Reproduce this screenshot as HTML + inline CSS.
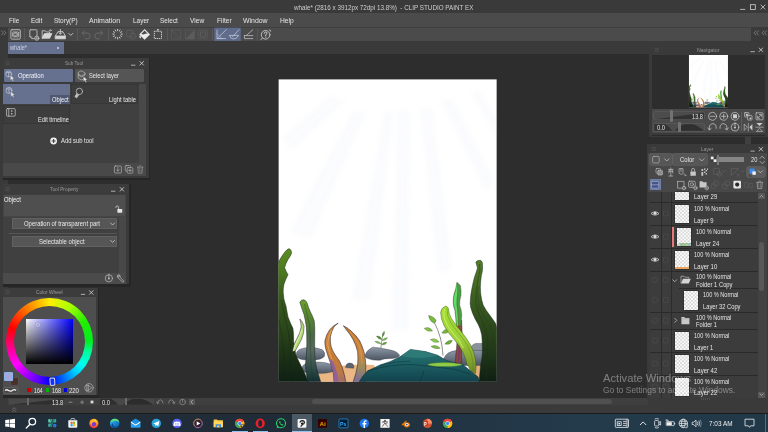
<!DOCTYPE html>
<html><head><meta charset="utf-8"><title>CLIP STUDIO PAINT EX</title>
<style>
html,body{margin:0;padding:0;background:#3a3a3a}
#root{position:relative;width:768px;height:432px;overflow:hidden;background:#3a3a3a;font-family:"Liberation Sans",sans-serif}
#root div,#root span,#root svg{position:absolute}
#root span{white-space:nowrap;line-height:1;display:block}
</style></head><body><div id="root">
<div style="left:8px;top:53.5px;width:640.5px;height:344.8px;background:#2d2d2d;"></div>
<div style="left:0px;top:0px;width:768px;height:13px;background:#3a3a3a;"></div>
<div style="left:0px;top:13px;width:768px;height:14px;background:#4b4b4b;"></div>
<div style="left:0px;top:27px;width:768px;height:14.5px;background:#3a3a3a;"></div>
<div style="left:8px;top:27.5px;width:743.7px;height:13.5px;background:#4b4b4b;"></div>
<div style="left:8px;top:27px;width:743px;height:0.6px;background:#3f3f3f;"></div>
<div style="left:0px;top:41.5px;width:768px;height:12px;background:#3a3a3a;"></div>
<div style="left:8px;top:42.3px;width:56px;height:11.7px;background:#65718f;"></div>
<div style="left:57px;top:46.9px;width:2.2px;height:2.2px;background:#cdd3e4;border-radius:50%"></div>
<div style="left:3px;top:58px;width:147px;height:121.5px;background:#262626;"></div>
<div style="left:3px;top:58px;width:145.5px;height:120px;background:#3a3a3a;"></div>
<div style="left:3px;top:58px;width:145.5px;height:10.5px;background:#3c3c3c;"></div>
<div style="left:3px;top:83.5px;width:143px;height:92px;background:#494949;"></div>
<div style="left:4px;top:69px;width:69px;height:13px;background:#65718f;border-radius:1px"></div>
<div style="left:75px;top:69px;width:69px;height:13px;background:#555555;border-radius:1px"></div>
<div style="left:3px;top:83.5px;width:135.5px;height:79.5px;background:#404040;"></div>
<div style="left:3px;top:83.5px;width:135.5px;height:0.7px;background:#353535;"></div>
<div style="left:3px;top:84px;width:67px;height:20px;background:#65718f;"></div>
<div style="left:50px;top:95px;width:19.5px;height:8.5px;background:#4f5870;"></div>
<div style="left:70.5px;top:84px;width:67.5px;height:20px;background:#3d3d3d;box-shadow:inset 0 0 0 0.5px #333"></div>
<div style="left:3px;top:104.5px;width:67px;height:19.5px;background:#3d3d3d;box-shadow:inset 0 0 0 0.5px #333"></div>
<div style="left:3px;top:184px;width:128px;height:103px;background:#262626;"></div>
<div style="left:3px;top:184px;width:126.2px;height:100px;background:#3a3a3a;"></div>
<div style="left:3px;top:184px;width:126.2px;height:10.5px;background:#3c3c3c;"></div>
<div style="left:3px;top:194.5px;width:123px;height:89px;background:#4b4b4b;"></div>
<div style="left:3.5px;top:195px;width:121.8px;height:21px;background:#4f4f4f;box-shadow:0 0 0 0.5px #404040"></div>
<div style="left:3px;top:217px;width:115.5px;height:55.8px;background:#404040;"></div>
<div style="left:12.3px;top:218.4px;width:104.7px;height:10.9px;background:#565656;border-radius:1.2px;box-shadow:inset 0 0 0 0.5px #6c6c6c"></div>
<div style="left:9px;top:232.5px;width:108px;height:0.7px;background:#565656;"></div>
<div style="left:12.3px;top:235.7px;width:104.7px;height:10.9px;background:#565656;border-radius:1.2px;box-shadow:inset 0 0 0 0.5px #6c6c6c"></div>
<div style="left:3px;top:288px;width:96px;height:109.5px;background:#262626;"></div>
<div style="left:3px;top:288px;width:94.7px;height:107px;background:#3a3a3a;"></div>
<div style="left:3px;top:288px;width:94.7px;height:9.5px;background:#3c3c3c;"></div>
<div style="left:3px;top:297.3px;width:93px;height:97.7px;background:#4e4e4e;"></div>
<div style="left:5.5px;top:297.9px;width:87.4px;height:87.4px;background:conic-gradient(from 0deg,#ffee00 0deg,#aaff00 30deg,#22ee00 60deg,#00ee22 90deg,#00ff99 105deg,#00ffee 125deg,#00ccff 140deg,#0066ff 160deg,#0000ff 180deg,#5500ff 195deg,#aa00ff 215deg,#ff00ff 235deg,#ff00aa 255deg,#ff0044 275deg,#ff0000 290deg,#ff6600 320deg,#ffaa00 340deg,#ffee00 360deg);border-radius:50%"></div>
<div style="left:13.8px;top:306.2px;width:70.8px;height:70.8px;background:#4e4e4e;border-radius:50%"></div>
<div style="left:26.2px;top:318.7px;width:46.7px;height:45.8px;background:linear-gradient(to bottom,rgba(0,0,0,0),#000),linear-gradient(to right,#fff,#0000ff);"></div>
<div style="left:27.4px;top:387.8px;width:3.8px;height:3.8px;background:#c80000;"></div>
<div style="left:45.6px;top:387.8px;width:3.8px;height:3.8px;background:#00b400;"></div>
<div style="left:63.6px;top:387.8px;width:3.8px;height:3.8px;background:#0000e0;"></div>
<div style="left:10.6px;top:377.7px;width:7.2px;height:7.6px;background:#4a3029;box-shadow:0 0 0 0.5px #5a5a5a;border-radius:1px"></div>
<div style="left:3.6px;top:372.2px;width:9.4px;height:9.2px;background:#a4a8dc;box-shadow:inset 0 0 0 1px #8fb2ea, 0 0 0 0.5px #3a4a66;border-radius:1.5px"></div>
<div style="left:8px;top:398.3px;width:187px;height:6.7px;background:#404040;"></div>
<div style="left:9px;top:398.8px;width:54.5px;height:6px;background:#484848;"></div>
<div style="left:100px;top:398.8px;width:53.5px;height:6px;background:#484848;"></div>
<div style="left:188.5px;top:398.6px;width:6.5px;height:6.4px;background:#565656;"></div>
<div style="left:195px;top:398.3px;width:453px;height:6.7px;background:#3f3f3f;"></div>
<div style="left:312px;top:399px;width:300px;height:5.4px;background:#505050;border-radius:2.7px"></div>
<div style="left:0px;top:405px;width:768px;height:9px;background:#3a3a3a;"></div>
<div style="left:648.5px;top:41.5px;width:119.5px;height:372px;background:#3a3a3a;"></div>
<div style="left:751px;top:27px;width:17px;height:14.5px;background:#3a3a3a;"></div>
<div style="left:651.7px;top:45px;width:113px;height:91.3px;background:#2a2a2a;"></div>
<div style="left:651.7px;top:45px;width:113px;height:90px;background:#3a3a3a;"></div>
<div style="left:652.3px;top:54.7px;width:112.4px;height:54px;background:#2d2d2d;"></div>
<div style="left:652.3px;top:108.7px;width:112.4px;height:24px;background:#4a4a4a;"></div>
<div style="left:654.3px;top:112.3px;width:49.6px;height:7px;background:#4c4c4c;border-radius:1px;box-shadow:0 0 0 0.5px #626262"></div>
<div style="left:654.3px;top:124px;width:49.6px;height:6.7px;background:#4c4c4c;border-radius:1px;box-shadow:0 0 0 0.5px #626262"></div>
<div style="left:741px;top:111.5px;width:0.7px;height:19.5px;background:#5e5e5e;"></div>
<div style="left:648.5px;top:136.5px;width:119.5px;height:7.2px;background:#2d2d2d;"></div>
<div style="left:745px;top:137px;width:6.3px;height:6.7px;background:#404040;"></div>
<div style="left:646.7px;top:143.7px;width:121.3px;height:256px;background:#3a3a3a;"></div>
<div style="left:648px;top:153.3px;width:118.5px;height:38.5px;background:#484848;"></div>
<div style="left:650px;top:154.2px;width:21.7px;height:11px;background:#565656;border-radius:1.2px;box-shadow:0 0 0 0.5px #6a6a6a"></div>
<div style="left:673.3px;top:154.2px;width:34px;height:11px;background:#565656;border-radius:1.2px;box-shadow:0 0 0 0.5px #6a6a6a"></div>
<div style="left:710.8px;top:157.2px;width:33.4px;height:4.8px;background:#858585;"></div>
<div style="left:716.5px;top:154.6px;width:2px;height:10px;background:#7a7a7a;"></div>
<div style="left:747px;top:167px;width:17.7px;height:10px;background:#5c5c5c;border-radius:1.2px;box-shadow:0 0 0 0.5px #6e6e6e"></div>
<div style="left:649.5px;top:179.2px;width:11.3px;height:11px;background:#62719a;border-radius:1px;box-shadow:inset 0 0 0 0.5px #7e8db4"></div>
<div style="left:649.5px;top:191.7px;width:108.5px;height:206.5px;background:#3c3c3c;"></div>
<div style="left:758px;top:191.7px;width:8.5px;height:206.5px;background:#424242;"></div>
<div style="left:758.6px;top:242.3px;width:5.6px;height:49px;background:#585858;border-radius:2.8px"></div>
<div style="left:758.3px;top:193px;width:6.4px;height:6px;background:#585858;border-radius:0.8px"></div>
<div style="left:758.3px;top:391.7px;width:6.4px;height:6px;background:#585858;border-radius:0.8px"></div>
<div style="left:660.6px;top:191.7px;width:0.7px;height:206.5px;background:#2c2c2c;"></div>
<div style="left:671.2px;top:191.7px;width:0.7px;height:206.5px;background:#2c2c2c;"></div>
<div style="left:649.5px;top:201.6px;width:108.5px;height:0.8px;background:#2a2a2a;"></div>
<div style="left:675px;top:191.7px;width:14.3px;height:8.5px;background:repeating-conic-gradient(#d4d4d4 0% 25%,#ffffff 0% 50%) 0 0/3.55px 3.55px;box-shadow:0 0 0 0.4px #222"></div>
<div style="left:649.5px;top:224.9px;width:108.5px;height:0.8px;background:#2a2a2a;"></div>
<div style="left:675px;top:204.6px;width:14.3px;height:18.3px;background:repeating-conic-gradient(#d4d4d4 0% 25%,#ffffff 0% 50%) 0 0/3.55px 3.55px;box-shadow:0 0 0 0.4px #222"></div>
<div style="left:649.5px;top:247.9px;width:108.5px;height:0.8px;background:#2a2a2a;"></div>
<div style="left:677px;top:227.9px;width:14.3px;height:18px;background:repeating-conic-gradient(#d4d4d4 0% 25%,#ffffff 0% 50%) 0 0/3.55px 3.55px;box-shadow:0 0 0 0.4px #222"></div>
<div style="left:672.2px;top:226.7px;width:2.3px;height:20px;background:#e87878;"></div>
<div style="left:649.5px;top:270.9px;width:108.5px;height:0.8px;background:#2a2a2a;"></div>
<div style="left:675px;top:250.9px;width:14.3px;height:18px;background:repeating-conic-gradient(#d4d4d4 0% 25%,#ffffff 0% 50%) 0 0/3.55px 3.55px;box-shadow:0 0 0 0.4px #222"></div>
<div style="left:679px;top:287.9px;width:79px;height:0.8px;background:#2a2a2a;"></div>
<div style="left:649.5px;top:311.6px;width:108.5px;height:0.8px;background:#2a2a2a;"></div>
<div style="left:683.8px;top:290.9px;width:14.3px;height:18.7px;background:repeating-conic-gradient(#d4d4d4 0% 25%,#ffffff 0% 50%) 0 0/3.55px 3.55px;box-shadow:0 0 0 0.4px #222"></div>
<div style="left:649.5px;top:328.8px;width:108.5px;height:0.8px;background:#2a2a2a;"></div>
<div style="left:649.5px;top:351.6px;width:108.5px;height:0.8px;background:#2a2a2a;"></div>
<div style="left:675px;top:331.8px;width:14.3px;height:17.8px;background:repeating-conic-gradient(#d4d4d4 0% 25%,#ffffff 0% 50%) 0 0/3.55px 3.55px;box-shadow:0 0 0 0.4px #222"></div>
<div style="left:649.5px;top:374.6px;width:108.5px;height:0.8px;background:#2a2a2a;"></div>
<div style="left:675px;top:354.6px;width:14.3px;height:18px;background:repeating-conic-gradient(#d4d4d4 0% 25%,#ffffff 0% 50%) 0 0/3.55px 3.55px;box-shadow:0 0 0 0.4px #222"></div>
<div style="left:649.5px;top:397.8px;width:108.5px;height:0.8px;background:#2a2a2a;"></div>
<div style="left:675px;top:377.6px;width:14.3px;height:18.2px;background:repeating-conic-gradient(#d4d4d4 0% 25%,#ffffff 0% 50%) 0 0/3.55px 3.55px;box-shadow:0 0 0 0.4px #222"></div>
<div style="left:646.7px;top:398.2px;width:121.3px;height:1.8px;background:#3a3a3a;"></div>
<div style="left:677.4px;top:243.2px;width:13.6px;height:2.4px;background:linear-gradient(to right,rgba(90,140,70,0.0),rgba(90,150,80,0.55) 30%,rgba(120,180,90,0.6) 70%,rgba(70,130,150,0.5));"></div>
<div style="left:675px;top:267px;width:14.3px;height:2.2px;background:#eaa45c;"></div>
<div style="left:118.5px;top:217px;width:7.5px;height:55.8px;background:#484848;"></div>
<div style="left:3px;top:272.8px;width:123px;height:11.2px;background:#4b4b4b;"></div>
<div style="left:0px;top:413.6px;width:768px;height:18.4px;background:linear-gradient(to right,#222f3b 0%,#1f2c38 40%,#243b4c 75%,#213848 100%);"></div>
<div style="left:0px;top:413.3px;width:768px;height:0.9px;background:#1a1a1a;"></div>
<div style="left:292.2px;top:414.2px;width:19.6px;height:17.8px;background:#4b5964;"></div>
<div style="left:292.2px;top:431px;width:19.6px;height:1px;background:#8fc3ee;"></div>
<div style="left:231.7px;top:431px;width:16px;height:1px;background:#8fc3ee;"></div>
<div style="left:252.7px;top:431px;width:15.5px;height:1px;background:#8fc3ee;"></div>
<div style="left:765.2px;top:414.2px;width:0.6px;height:17.8px;background:#5a6b78;"></div>
<svg width="768" height="432" viewBox="0 0 768 432" style="left:0;top:0">
<g fill="none" stroke="#8c8c8c" stroke-width="0.7" stroke-linecap="round" stroke-linejoin="round" ><path d="M1.4 30.8 L3.4 32.9 L1.4 35 M4 30.8 L6 32.9 L4 35"/></g>
<g fill="none" stroke="#c4c4c4" stroke-width="0.8" stroke-linecap="round" stroke-linejoin="round" ><rect x="10.8" y="29.6" width="9.6" height="9.6" rx="1.4" fill="#565656"/><ellipse cx="15.6" cy="34.4" rx="3.7" ry="2.1" transform="rotate(28 15.6 34.4)" stroke-width="0.6"/><ellipse cx="15.6" cy="34.4" rx="3.7" ry="2.1" transform="rotate(-28 15.6 34.4)" stroke-width="0.6"/><ellipse cx="15.6" cy="34.4" rx="1.7" ry="1.1" stroke-width="0.5"/></g>
<rect x="24.049999999999997" y="28.3" width="0.7" height="12" fill="#606060"/>
<rect x="77.15" y="28.3" width="0.7" height="12" fill="#606060"/>
<rect x="108.15" y="28.3" width="0.7" height="12" fill="#606060"/>
<rect x="167.15" y="28.3" width="0.7" height="12" fill="#606060"/>
<rect x="212.05" y="28.3" width="0.7" height="12" fill="#606060"/>
<rect x="256.95" y="28.3" width="0.7" height="12" fill="#606060"/>
<g fill="none" stroke="#cccccc" stroke-width="0.8" stroke-linecap="round" stroke-linejoin="round" ><path d="M30.6 29.8 H36.2 Q37 29.8 37 30.6 V35.8 M30.6 29.8 Q29.8 29.8 29.8 30.6 V36.6 L31.8 38.6 H34.2"/><circle cx="36.8" cy="38.2" r="2.1"/><path d="M35.6 38.2 H38 M36.8 37 V39.4" stroke-width="0.6"/><path d="M29.8 36.6 H31.8 V38.6" stroke-width="0.5"/></g>
<g fill="none" stroke="#d6d6d6" stroke-width="0.8" stroke-linecap="round" stroke-linejoin="round" ><path d="M42.2 38 V30.8 H45.4 L46.4 32 H49.6 V33.6 M42.2 38 L44.4 33.6 H52 L49.8 38Z"/><path d="M49.2 30.4 H51.4 M50.6 29.6 L51.4 30.4 L50.6 31.2" stroke-width="0.6"/></g>
<g fill="#d6d6d6" stroke="none" stroke-width="0.8" stroke-linecap="round" stroke-linejoin="round" ><path d="M44.4 33.6 H52 L49.8 38 H42.2Z" fill="#d6d6d6" stroke="none"/></g>
<g fill="none" stroke="#d6d6d6" stroke-width="0.8" stroke-linecap="round" stroke-linejoin="round" ><path d="M55.4 36 L58 31.6 H62.8 L65.4 36 V38.8 H55.4Z M55.4 36 H65.4"/><path d="M60.4 29.4 V34 M58.8 32.6 L60.4 34.2 L62 32.6"/></g>
<rect x="55.4" y="36" width="10" height="2.8" fill="#d6d6d6"/>
<g fill="none" stroke="#d6d6d6" stroke-width="0.8" stroke-linecap="round" stroke-linejoin="round" ><path d="M68.8 33.4 L70.8 35.4 L72.8 33.4"/></g>
<g fill="none" stroke="#6c6c6c" stroke-width="0.9" stroke-linecap="round" stroke-linejoin="round" ><path d="M84.2 31 L82.2 33 L84.2 35 M82.4 33 H87.4 Q90.2 33.2 90.2 36 Q90.2 38.8 87.2 38.8 H85.6"/></g>
<g fill="none" stroke="#6c6c6c" stroke-width="0.9" stroke-linecap="round" stroke-linejoin="round" ><path d="M100.8 31 L102.8 33 L100.8 35 M102.6 33 H97.6 Q94.8 33.2 94.8 36 Q94.8 38.8 97.8 38.8 H99.4"/></g>
<path d="M120.70 34.10 L122.80 34.10 M120.28 35.65 L122.10 36.70 M119.15 36.78 L120.20 38.60 M117.60 37.20 L117.60 39.30 M116.05 36.78 L115.00 38.60 M114.92 35.65 L113.10 36.70 M114.50 34.10 L112.40 34.10 M114.92 32.55 L113.10 31.50 M116.05 31.42 L115.00 29.60 M117.60 31.00 L117.60 28.90 M119.15 31.42 L120.20 29.60 M120.28 32.55 L122.10 31.50 " fill="none" stroke="#d6d6d6" stroke-width="0.9"/>
<g fill="none" stroke="#5e5e5e" stroke-width="0.8" stroke-linecap="round" stroke-linejoin="round" ><rect x="126.6" y="30.4" width="6.4" height="6.4" rx="0.6"/><circle cx="133" cy="36" r="3"/></g>
<path d="M144.6 29 L150 34.5 L144.6 39.8 L139.2 34.5Z" fill="#ececec"/><path d="M144.6 30.6 L147.9 33.9 Q146.4 33.2 144.8 34 Q143 34.8 141.3 33.9Z" fill="#4b4b4b"/><path d="M139.6 35.6 Q138.8 37.8 140.2 38.4 Q141.4 37.8 140.8 36.2Z" fill="#ececec"/>
<rect x="154.3" y="31.3" width="7.2" height="7.2" fill="none" stroke="#d6d6d6" stroke-width="1" stroke-dasharray="1.2 0.8"/><path d="M157.9 29.2 V31.3" stroke="#d6d6d6" stroke-width="0.8"/><rect x="157.2" y="29" width="1.4" height="1.2" fill="#d6d6d6"/>
<g fill="none" stroke="#5c5c5c" stroke-width="0.7" stroke-linecap="round" stroke-linejoin="round" ><rect x="171.4" y="30" width="9" height="9" stroke-dasharray="0.8 0.8"/><path d="M171.4 30 L180.4 39"/></g>
<g fill="none" stroke="#5c5c5c" stroke-width="0.7" stroke-linecap="round" stroke-linejoin="round" ><rect x="185.4" y="30" width="9" height="9" stroke-dasharray="0.8 0.8"/></g>
<path d="M185.4 39 L194.4 30 V39Z" fill="#5c5c5c"/>
<g fill="none" stroke="#5a5a5a" stroke-width="0.7" stroke-linecap="round" stroke-linejoin="round" ><rect x="198.6" y="30" width="8.8" height="8.8" rx="1.4"/><rect x="200.6" y="32" width="4.8" height="4.8" stroke-width="1.2"/></g>
<rect x="214.3" y="27.7" width="26.5" height="13.2" fill="#5f6c8c"/>
<g fill="none" stroke="#c2c8da" stroke-width="0.75" stroke-linecap="round" stroke-linejoin="round" ><path d="M217 30 V38.6 H225.6 M217.4 38.2 L226.4 29.6"/><path d="M217 38.6 L222 38.6 L217 33.6" stroke-width="0.5"/></g>
<g fill="none" stroke="#c2c8da" stroke-width="0.75" stroke-linecap="round" stroke-linejoin="round" ><path d="M229.6 35.4 H238.6 Q236.8 39.2 233 39 Q230.2 38.6 229.6 35.4Z M232.6 36.6 L239 29.8"/></g>
<g fill="none" stroke="#c4c4c4" stroke-width="0.75" stroke-linecap="round" stroke-linejoin="round" ><path d="M244.4 35.6 H252.8 M244.4 35.6 V38.6 H252.8 M246.4 35.4 L252.8 29.8"/></g>
<g fill="none" stroke="#d6d6d6" stroke-width="0.8" stroke-linecap="round" stroke-linejoin="round" ><circle cx="265.6" cy="34.8" r="4.3"/><path d="M262.2 38.2 L261 39.6 M269.4 30 Q270.8 29.6 270.8 31.2"/><path d="M264.2 33.4 Q264.4 32 265.7 32 Q267.1 32.1 267 33.4 Q266.8 34.4 265.7 34.8 V35.8 M265.7 37 V37.2" stroke-width="0.9"/></g>
<g fill="none" stroke="#8c8c8c" stroke-width="0.7" stroke-linecap="round" stroke-linejoin="round" ><path d="M756 30.8 L754 32.9 L756 35 M758.6 30.8 L756.6 32.9 L758.6 35"/></g>
<g fill="none" stroke="#8c8c8c" stroke-width="0.7" stroke-linecap="round" stroke-linejoin="round" ><path d="M764 30.8 L762 32.9 L764 35 M766.6 30.8 L764.6 32.9 L766.6 35"/></g>
<g stroke="#555555" stroke-width="0.6"><path d="M5.3 61.7 h4.4 M5.3 63.2 h4.4 M5.3 64.7 h4.4"/></g>
<path d="M131 65.2 h4.4" stroke="#b8b8b8" stroke-width="0.9"/>
<path d="M139.6 61.199999999999996 l4.2 4.2 M143.79999999999998 61.199999999999996 l-4.2 4.2" stroke="#d8d8d8" stroke-width="0.8"/>
<g stroke="#555555" stroke-width="0.6"><path d="M5.3 187.7 h4.4 M5.3 189.2 h4.4 M5.3 190.7 h4.4"/></g>
<path d="M111 191.20000000000002 h4.4" stroke="#b8b8b8" stroke-width="0.9"/>
<path d="M119.8 187.20000000000002 l4.2 4.2 M124.0 187.20000000000002 l-4.2 4.2" stroke="#d8d8d8" stroke-width="0.8"/>
<g stroke="#555555" stroke-width="0.6"><path d="M5.3 290.7 h4.4 M5.3 292.2 h4.4 M5.3 293.7 h4.4"/></g>
<path d="M80.8 294.4 h4.4" stroke="#b8b8b8" stroke-width="0.9"/>
<path d="M89.2 290.4 l4.2 4.2 M93.4 290.4 l-4.2 4.2" stroke="#d8d8d8" stroke-width="0.8"/>
<g stroke="#555555" stroke-width="0.6"><path d="M654.6 48.3 h4.4 M654.6 49.8 h4.4 M654.6 51.3 h4.4"/></g>
<path d="M750.4 51.699999999999996 h4.4" stroke="#b8b8b8" stroke-width="0.9"/>
<path d="M758.8 47.699999999999996 l4.2 4.2 M763.0 47.699999999999996 l-4.2 4.2" stroke="#d8d8d8" stroke-width="0.8"/>
<g stroke="#555555" stroke-width="0.6"><path d="M651.6 147.6 h4.4 M651.6 149.1 h4.4 M651.6 150.6 h4.4"/></g>
<path d="M750.4 151.1 h4.4" stroke="#b8b8b8" stroke-width="0.9"/>
<path d="M758.8 147.1 l4.2 4.2 M763.0 147.1 l-4.2 4.2" stroke="#d8d8d8" stroke-width="0.8"/>
<path d="M740.2 9.4 H745.2" stroke="#d0d0d0" stroke-width="0.8"/><rect x="750.5" y="4.7" width="4.8" height="4.8" fill="none" stroke="#d0d0d0" stroke-width="0.8"/><path d="M760.7 4.7 L765.3 9.4 M765.3 4.7 L760.7 9.4" stroke="#d0d0d0" stroke-width="0.8"/>
<g fill="none" stroke="#d0d4e0" stroke-width="0.6" stroke-linecap="round" stroke-linejoin="round" ><circle cx="8.600000000000001" cy="74.0" r="3"/><path d="M6.6000000000000005 72.6 h4 M8.600000000000001 72.6 v4"/></g>
<path d="M10.4 75.19999999999999 l0 5.2 l1.3 -1.2 l1 2 l0.9 -0.5 l-1 -1.9 l1.7 -0.2Z" fill="#e8e8e8" stroke="#50586c" stroke-width="0.3"/>
<g fill="none" stroke="#d0d4e0" stroke-width="0.6" stroke-linecap="round" stroke-linejoin="round" ><circle cx="9.0" cy="90.4" r="3"/><path d="M7.0 89 h4 M9.0 89 v4"/></g>
<path d="M10.8 91.6 l0 5.2 l1.3 -1.2 l1 2 l0.9 -0.5 l-1 -1.9 l1.7 -0.2Z" fill="#e8e8e8" stroke="#50586c" stroke-width="0.3"/>
<g fill="none" stroke="#c8c8c8" stroke-width="0.6" stroke-linecap="round" stroke-linejoin="round" ><path d="M81.6 71 L85 72.8 V75.2 L81.6 77 L78.2 75.2 V72.8Z M78.2 75.4 V78.2 L81.6 80 L85 78.2 M78.2 74 L81.6 75.8 L85 74"/></g>
<path d="M83.4 76.4 l0 5.2 l1.3 -1.2 l1 2 l0.9 -0.5 l-1 -1.9 l1.7 -0.2Z" fill="#e8e8e8" stroke="#444" stroke-width="0.3"/>
<g fill="none" stroke="#d0d0d0" stroke-width="0.7" stroke-linecap="round" stroke-linejoin="round" ><circle cx="79.4" cy="91.4" r="3.2"/><path d="M77 93.6 L75 96.6 L76.8 97.8 L78.8 94.6"/></g>
<path d="M76.6 93.4 L74.6 96.6 L76.6 98 L78.8 95Z" fill="#bcbcbc"/>
<g fill="none" stroke="#d0d0d0" stroke-width="0.7" stroke-linecap="round" stroke-linejoin="round" ><rect x="6.6" y="108.6" width="8.6" height="7.6" rx="0.8"/><path d="M8.8 108.6 V116.2"/></g>
<circle cx="11.8" cy="111" r="0.8" fill="#d0d0d0"/><circle cx="11.8" cy="113.8" r="0.8" fill="#d0d0d0"/>
<circle cx="53.6" cy="141" r="3.4" fill="#f0f0f0"/><path d="M51.6 141 H55.6 M53.6 139 V143" stroke="#404040" stroke-width="1.1"/>
<g fill="none" stroke="#b8b8b8" stroke-width="0.65" stroke-linecap="round" stroke-linejoin="round" ><rect x="114.4" y="166" width="7" height="7" rx="1"/><path d="M117.9 167.4 V171 M116.5 169.8 L117.9 171.2 L119.3 169.8"/></g>
<g fill="none" stroke="#b8b8b8" stroke-width="0.65" stroke-linecap="round" stroke-linejoin="round" ><rect x="125.2" y="165.6" width="5.4" height="5.4" rx="1"/><rect x="127.2" y="167.6" width="5.6" height="5.6" rx="1" fill="#484848"/><path d="M128.6 170.4 H131.4 M130 169 V171.8"/></g>
<g fill="none" stroke="#9a9a9a" stroke-width="0.65" stroke-linecap="round" stroke-linejoin="round" ><path d="M137.4 167.2 H143 M138 167.2 L138.4 173.2 H142 L142.4 167.2 M139.2 166 H141.2"/><path d="M139.4 168.4 V172 M141 168.4 V172" stroke-width="0.4"/></g>
<rect x="117.4" y="209" width="4.8" height="3.8" rx="0.5" fill="#e4e4e4"/><path d="M118.6 209 V207.4 Q118.6 206 117.2 206 Q115.9 206 115.9 207.4 V208" fill="none" stroke="#e4e4e4" stroke-width="0.7"/>
<g fill="none" stroke="#d8d8d8" stroke-width="0.7" stroke-linecap="round" stroke-linejoin="round" ><path d="M110.6 223 L112.6 225 L114.6 223"/></g>
<g fill="none" stroke="#d8d8d8" stroke-width="0.7" stroke-linecap="round" stroke-linejoin="round" ><path d="M110.6 240.4 L112.6 242.4 L114.6 240.4"/></g>
<g fill="none" stroke="#c8c8c8" stroke-width="0.65" stroke-linecap="round" stroke-linejoin="round" ><circle cx="108.9" cy="278.3" r="3.6"/><path d="M108.9 274 V277.4"/></g>
<circle cx="108.9" cy="278.5" r="0.9" fill="#c8c8c8"/>
<g fill="none" stroke="#c8c8c8" stroke-width="0.65" stroke-linecap="round" stroke-linejoin="round" ><path d="M117.6 275.6 Q116.6 277.8 118.8 278.6 L122.6 282 Q123.6 282.4 123.8 281.2 L120.4 277.4 Q120.6 275 118.6 274.6 L119.4 276.4 L118.6 277Z"/></g>
<circle cx="37.9" cy="324.7" r="2.1" fill="none" stroke="#e8e8f0" stroke-width="0.6"/><circle cx="37.9" cy="324.7" r="2.6" fill="none" stroke="#6a6a9a" stroke-width="0.35"/>
<rect x="50" y="378" width="4.8" height="7.4" rx="1" fill="#1030ff" stroke="#ffffff" stroke-width="1" transform="rotate(-4 52.4 381.7)"/><rect x="49.4" y="377.4" width="6" height="8.6" rx="1.4" fill="none" stroke="#222" stroke-width="0.35" transform="rotate(-4 52.4 381.7)"/>
<rect x="3.5" y="387.6" width="14.4" height="5.6" rx="1.2" fill="#454545" stroke="#8a8a8a" stroke-width="0.4"/><path d="M5 390.6 Q6.6 389 8.4 390.4 Q10.4 391.8 12.2 390.4 Q14 389 16.2 390.4" fill="none" stroke="#f0f0f0" stroke-width="1.3"/>
<g fill="none" stroke="#c4c4c4" stroke-width="0.6" stroke-linecap="round" stroke-linejoin="round" ><circle cx="89" cy="387.8" r="4.2"/><path d="M86.8 385.2 V390.4 M86.8 385.2 H88.6 M86.8 390.4 H88.6 M88.6 385.6 L91.6 387.8 L88.6 390Z"/></g>
<path d="M9 404.8 L63.5 398.8 V404.8Z" fill="#2f2f2f"/>
<path d="M123 404.8 Q128 400 133 399 H142 Q148 400.4 153.5 404.8Z" fill="#2c2c2c"/><path d="M100 398.8 H111 Q115 400.6 118 404.8 H100Z" fill="#2f2f2f"/>
<path d="M68.6 402.2 H72.4" stroke="#8c8c8c" stroke-width="0.9"/><path d="M80.2 402.2 H84 M82.1 400.3 V404.1" stroke="#8c8c8c" stroke-width="0.9"/><rect x="90.6" y="400.6" width="2.8" height="2.8" fill="#dcdcdc"/>
<g fill="none" stroke="#9a9a9a" stroke-width="0.65" stroke-linecap="round" stroke-linejoin="round" ><path d="M157.6 403.4 Q157.4 400 160.4 399.8 Q163 400 163 403 M156.6 402 L157.6 403.6 L158.8 402.2"/></g>
<g fill="none" stroke="#9a9a9a" stroke-width="0.65" stroke-linecap="round" stroke-linejoin="round" ><path d="M174 403.4 Q174.2 400 171.2 399.8 Q168.6 400 168.6 403 M175 402 L174 403.6 L172.8 402.2"/></g>
<g fill="none" stroke="#9a9a9a" stroke-width="0.6" stroke-linecap="round" stroke-linejoin="round" ><circle cx="182.6" cy="402" r="2.8"/><path d="M182.6 399.4 V402"/></g>
<g fill="none" stroke="#c8c8c8" stroke-width="0.7" stroke-linecap="round" stroke-linejoin="round" ><path d="M192.6 400.2 L190.8 402 L192.6 403.8"/></g>
<g fill="none" stroke="#8a8a8a" stroke-width="0.6" stroke-linecap="round" stroke-linejoin="round" ><path d="M12.4 409.4 L14.2 407.6 L16 409.4 M12.4 411.8 L14.2 410 L16 411.8"/></g>
<path d="M655 119.3 L703.9 112.8 V119.3Z" fill="#323232"/>
<path d="M675 130.7 Q680 125 685 124.2 H693 Q698 125.6 703.9 130.7Z" fill="#2f2f2f"/><path d="M654.3 124 H665 Q669 126 672 130.7 H654.3Z" fill="#323232"/>
<g fill="none" stroke="#cfcfcf" stroke-width="0.7" stroke-linecap="round" stroke-linejoin="round" ><circle cx="712.5" cy="116.3" r="4"/><path d="M710.3 116.3 H714.7"/></g>
<g fill="none" stroke="#cfcfcf" stroke-width="0.7" stroke-linecap="round" stroke-linejoin="round" ><circle cx="723.7" cy="116.3" r="4"/><path d="M721.5 116.3 H725.9 M723.7 114.1 V118.5"/></g>
<g fill="none" stroke="#cfcfcf" stroke-width="0.7" stroke-linecap="round" stroke-linejoin="round" ><circle cx="735" cy="116.3" r="4"/></g>
<rect x="733" y="114.3" width="4" height="4" rx="0.5" fill="#cfcfcf"/>
<g fill="none" stroke="#cfcfcf" stroke-width="0.65" stroke-linecap="round" stroke-linejoin="round" ><rect x="744.6" y="112.6" width="4.4" height="4.4" rx="0.5"/><rect x="747.6" y="115.6" width="4.4" height="4.4" rx="0.5" fill="#4a4a4a"/></g>
<rect x="745.8" y="113.8" width="2" height="2" fill="#cfcfcf"/><rect x="749.6" y="117.6" width="1.6" height="1.6" fill="#cfcfcf"/>
<g fill="none" stroke="#cfcfcf" stroke-width="0.65" stroke-linecap="round" stroke-linejoin="round" ><rect x="756" y="112.8" width="7" height="7" rx="0.6"/><path d="M757.6 118.2 L761.4 114.4 M759.4 114.4 H761.4 V116.4 M757.6 116.2 V118.2 H759.6"/></g>
<g fill="none" stroke="#cfcfcf" stroke-width="0.7" stroke-linecap="round" stroke-linejoin="round" ><path d="M709.4 129.6 Q708.4 124 713 123.6 Q716.6 124 716.2 128.4 M708 128 L709.4 130 L711.2 128.4"/></g>
<g fill="none" stroke="#cfcfcf" stroke-width="0.7" stroke-linecap="round" stroke-linejoin="round" ><path d="M726.8 129.6 Q727.8 124 723.2 123.6 Q719.6 124 720 128.4 M728.2 128 L726.8 130 L725 128.4"/></g>
<g fill="none" stroke="#cfcfcf" stroke-width="0.7" stroke-linecap="round" stroke-linejoin="round" ><circle cx="735" cy="127.2" r="3.8"/><path d="M735 122.6 V126"/></g>
<circle cx="735" cy="127.4" r="1" fill="#cfcfcf"/>
<path d="M744.2 124 V130.4 L747.2 127.2Z" fill="none" stroke="#cfcfcf" stroke-width="0.6"/><path d="M752.4 124 V130.4 L749.4 127.2Z" fill="#cfcfcf"/><path d="M748.3 123 V131.4" stroke="#cfcfcf" stroke-width="0.6"/>
<path d="M756.4 123 H762.6 L759.5 126Z" fill="#cfcfcf"/><path d="M756.4 131.4 H762.6 L759.5 128.4Z" fill="none" stroke="#cfcfcf" stroke-width="0.6"/><path d="M755.4 127.2 H763.6" stroke="#cfcfcf" stroke-width="0.6"/>
<g fill="none" stroke="#b0b0b0" stroke-width="0.7" stroke-linecap="round" stroke-linejoin="round" ><rect x="652.6" y="156.4" width="6.6" height="6.6" rx="1.2"/></g>
<g fill="none" stroke="#d0d0d0" stroke-width="0.7" stroke-linecap="round" stroke-linejoin="round" ><path d="M664.6 158.8 L666.8 161 L669 158.8"/></g>
<g fill="none" stroke="#d0d0d0" stroke-width="0.7" stroke-linecap="round" stroke-linejoin="round" ><path d="M699.6 158.8 L701.8 161 L704 158.8"/></g>
<rect x="710.8" y="156.6" width="5.6" height="5.4" fill="#3a3a3a"/><rect x="710.8" y="156.6" width="2.8" height="2.7" fill="#f0f0f0"/><rect x="713.6" y="159.3" width="2.8" height="2.7" fill="#f0f0f0"/>
<g fill="none" stroke="#d0d0d0" stroke-width="0.65" stroke-linecap="round" stroke-linejoin="round" ><path d="M760 158.4 L762.2 156.2 L764.4 158.4 M760 161.4 L762.2 163.6 L764.4 161.4"/></g>
<g fill="none" stroke="#c8c8c8" stroke-width="0.6" stroke-linecap="round" stroke-linejoin="round" ><rect x="656" y="168.6" width="4.6" height="4.6" rx="0.8"/><rect x="657.8" y="170.4" width="4.6" height="4.6" rx="0.8" fill="#8a8a8a"/></g>
<g fill="none" stroke="#c8c8c8" stroke-width="0.6" stroke-linecap="round" stroke-linejoin="round" ><path d="M670.8 168 V176 M668.8 176 H672.8 M668.4 169.4 L673.2 169.4 M668.6 171.4 L673 171.4 M669.6 169.4 L668.8 173 M672 169.4 L672.8 173"/></g>
<g fill="none" stroke="#c8c8c8" stroke-width="0.6" stroke-linecap="round" stroke-linejoin="round" ><path d="M679.4 168.6 H683 V173.6 Q681.2 175.4 679.4 173.6Z M684 174.4 Q685.6 173 685 175.6 L686.2 175.6"/><path d="M680.6 168.6 V171.4 M681.8 168.6 V171.4" stroke-width="0.4"/></g>
<rect x="690.4" y="171.6" width="5.4" height="4.2" rx="0.5" fill="#c8c8c8"/><path d="M691.6 171.6 V170 Q691.6 168.4 693.1 168.4 Q694.6 168.4 694.6 170 V171.6" fill="none" stroke="#c8c8c8" stroke-width="0.7"/>
<g fill="#c8c8c8"><rect x="701.4" y="172" width="1.8" height="3.8"/><circle cx="702.3" cy="170" r="1.1"/><rect x="704" y="168.4" width="1.4" height="1.4"/><rect x="705.6" y="170" width="1.4" height="1.4"/><rect x="704" y="171.6" width="1.4" height="1.4"/><rect x="705.6" y="173.2" width="1.4" height="1.4"/><rect x="707" y="168.4" width="1" height="1.4"/></g>
<g fill="none" stroke="#646464" stroke-width="0.6" stroke-linecap="round" stroke-linejoin="round" ><rect x="713.4" y="168.4" width="6" height="6" rx="0.8" stroke-dasharray="1 0.6"/><circle cx="719.4" cy="174" r="2.2"/><path d="M722.4 170.6 L724 172.2 L725.6 170.6"/></g>
<g fill="none" stroke="#646464" stroke-width="0.6" stroke-linecap="round" stroke-linejoin="round" ><path d="M731.6 168.6 H738.6 L731.6 175.4Z M737 174 L739.4 176.4 M739.4 174 L737 176.4 M741 170.6 L742.6 172.2 L744.2 170.6"/></g>
<rect x="749.6" y="168.6" width="5" height="5" fill="#3c8cf0"/><rect x="752.4" y="171.4" width="3.4" height="3.4" fill="#f4f4f4"/><path d="M749.8 174.6 v1.6 h1.6" fill="none" stroke="#222" stroke-width="0.5"/>
<g fill="none" stroke="#d4d4d4" stroke-width="0.7" stroke-linecap="round" stroke-linejoin="round" ><path d="M758.4 170.8 L760.4 172.8 L762.4 170.8"/></g>
<g fill="none" stroke="#a4b2d8" stroke-width="0.7" stroke-linecap="round" stroke-linejoin="round" ><rect x="651.4" y="181.4" width="7.4" height="6.8" rx="0.8" fill="#465480"/><path d="M651.4 184.8 H658.8"/></g>
<g fill="none" stroke="#c8c8c8" stroke-width="0.65" stroke-linecap="round" stroke-linejoin="round" ><path d="M677.6 181.4 H684 V186.6 M677.6 181.4 V188.2 H681.6"/><circle cx="684" cy="188" r="1.7"/><path d="M683 188 H685" stroke-width="0.5"/></g>
<g fill="none" stroke="#c8c8c8" stroke-width="0.65" stroke-linecap="round" stroke-linejoin="round" ><rect x="688.6" y="181.2" width="6.6" height="6.2" rx="1"/><circle cx="691.9" cy="184.3" r="1.6"/><circle cx="695.4" cy="188" r="1.7" fill="#484848"/><path d="M694.4 188 H696.4" stroke-width="0.5"/></g>
<path d="M699.6 181.2 H702.4 L703.2 182.2 H706.6 V187.6 H699.6Z" fill="#c8c8c8"/><circle cx="706.8" cy="188" r="1.8" fill="#484848" stroke="#c8c8c8" stroke-width="0.6"/><path d="M705.8 188 H707.8 M706.8 187 V189" stroke="#c8c8c8" stroke-width="0.5"/>
<g fill="none" stroke="#606060" stroke-width="0.6" stroke-linecap="round" stroke-linejoin="round" ><rect x="711.4" y="184" width="4.4" height="4.4" rx="0.6"/><rect x="714" y="181.2" width="4.4" height="4.4" rx="0.6"/></g>
<g fill="none" stroke="#606060" stroke-width="0.6" stroke-linecap="round" stroke-linejoin="round" ><rect x="722.6" y="184" width="4.4" height="4.4" rx="0.6"/><rect x="725.2" y="181.2" width="4.4" height="4.4" rx="0.6"/></g>
<rect x="733.4" y="180.8" width="7.6" height="7.6" rx="0.8" fill="#e4e4e4"/><circle cx="737.2" cy="184.6" r="2.1" fill="#2a2a2a"/>
<g fill="none" stroke="#5c5c5c" stroke-width="0.6" stroke-linecap="round" stroke-linejoin="round" ><rect x="744.4" y="182.6" width="4" height="4.6" rx="0.6"/><rect x="749" y="183.6" width="3.6" height="4" rx="0.6"/></g>
<g fill="none" stroke="#b0b0b0" stroke-width="0.65" stroke-linecap="round" stroke-linejoin="round" ><path d="M756.6 182.4 H762.8 M757.2 182.4 L757.6 188.6 H761.8 L762.2 182.4 M758.6 181.2 H760.8"/><path d="M758.8 183.6 V187.4 M760.6 183.6 V187.4" stroke-width="0.4"/></g>
<g fill="none" stroke="#d0d0d0" stroke-width="0.6" stroke-linecap="round" stroke-linejoin="round" ><path d="M759.9 197 L761.5 195.4 L763.1 197"/></g>
<g fill="none" stroke="#d0d0d0" stroke-width="0.6" stroke-linecap="round" stroke-linejoin="round" ><path d="M759.9 393.8 L761.5 395.4 L763.1 393.8"/></g>
<g fill="#7a7a7a"><rect x="701" y="398.6" width="0.8" height="0.8"/><rect x="703" y="398.6" width="0.8" height="0.8"/><rect x="705" y="398.6" width="0.8" height="0.8"/><rect x="707" y="398.6" width="0.8" height="0.8"/><rect x="709" y="398.6" width="0.8" height="0.8"/></g>
<path d="M651 213.5 Q655 209.9 659 213.5 Q655 216.7 651 213.5Z" fill="none" stroke="#e0e0e0" stroke-width="0.7"/><circle cx="655" cy="213.3" r="1.5" fill="#e0e0e0"/>
<rect x="663.4" y="211.1" width="4.8" height="4.8" rx="0.9" fill="none" stroke="#505050" stroke-width="0.6"/>
<path d="M651 236.7 Q655 233.1 659 236.7 Q655 239.89999999999998 651 236.7Z" fill="none" stroke="#e0e0e0" stroke-width="0.7"/><circle cx="655" cy="236.5" r="1.5" fill="#e0e0e0"/>
<rect x="663.4" y="234.29999999999998" width="4.8" height="4.8" rx="0.9" fill="none" stroke="#505050" stroke-width="0.6"/>
<path d="M651 259.7 Q655 256.09999999999997 659 259.7 Q655 262.9 651 259.7Z" fill="none" stroke="#e0e0e0" stroke-width="0.7"/><circle cx="655" cy="259.5" r="1.5" fill="#e0e0e0"/>
<rect x="663.4" y="257.3" width="4.8" height="4.8" rx="0.9" fill="none" stroke="#505050" stroke-width="0.6"/>
<rect x="652.6" y="277.40000000000003" width="4.8" height="4.8" rx="0.9" fill="none" stroke="#505050" stroke-width="0.6"/>
<rect x="663.4" y="277.40000000000003" width="4.8" height="4.8" rx="0.9" fill="none" stroke="#505050" stroke-width="0.6"/>
<rect x="652.6" y="297.6" width="4.8" height="4.8" rx="0.9" fill="none" stroke="#505050" stroke-width="0.6"/>
<rect x="663.4" y="297.6" width="4.8" height="4.8" rx="0.9" fill="none" stroke="#505050" stroke-width="0.6"/>
<rect x="652.6" y="318.20000000000005" width="4.8" height="4.8" rx="0.9" fill="none" stroke="#505050" stroke-width="0.6"/>
<rect x="663.4" y="318.20000000000005" width="4.8" height="4.8" rx="0.9" fill="none" stroke="#505050" stroke-width="0.6"/>
<rect x="652.6" y="338.20000000000005" width="4.8" height="4.8" rx="0.9" fill="none" stroke="#505050" stroke-width="0.6"/>
<rect x="663.4" y="338.20000000000005" width="4.8" height="4.8" rx="0.9" fill="none" stroke="#505050" stroke-width="0.6"/>
<rect x="652.6" y="361.1" width="4.8" height="4.8" rx="0.9" fill="none" stroke="#505050" stroke-width="0.6"/>
<rect x="663.4" y="361.1" width="4.8" height="4.8" rx="0.9" fill="none" stroke="#505050" stroke-width="0.6"/>
<rect x="652.6" y="384.1" width="4.8" height="4.8" rx="0.9" fill="none" stroke="#505050" stroke-width="0.6"/>
<rect x="663.4" y="384.1" width="4.8" height="4.8" rx="0.9" fill="none" stroke="#505050" stroke-width="0.6"/>
<path d="M681 276.2 H684 L684.8 277.2 H688.6 V278.6 M681 276.2 V283.4" fill="none" stroke="#d4d4d4" stroke-width="0.6"/><path d="M681 283.4 L683 278.8 H690.8 L688.8 283.4Z" fill="#d4d4d4"/>
<g fill="none" stroke="#d0d0d0" stroke-width="0.7" stroke-linecap="round" stroke-linejoin="round" ><path d="M672.8 279.8 L674.7 281.8 L676.6 279.8"/></g>
<path d="M681.4 317 H684.4 L685.2 318 H689.4 V324.2 H681.4Z" fill="#c8c8c8"/><path d="M681.4 318.8 H689.4" stroke="#909090" stroke-width="0.4"/>
<g fill="none" stroke="#d0d0d0" stroke-width="0.7" stroke-linecap="round" stroke-linejoin="round" ><path d="M674.8 318.4 L676.8 320.4 L674.8 322.4"/></g>

<defs>
<filter id="blr" x="-20%" y="-20%" width="140%" height="140%"><feGaussianBlur stdDeviation="2.2"/></filter>
<clipPath id="cv"><rect x="278.4" y="79.2" width="218.4" height="302.6"/></clipPath>
<linearGradient id="gLS" x1="0" y1="249" x2="0" y2="382" gradientUnits="userSpaceOnUse"><stop offset="0" stop-color="#5c8e22"/><stop offset="0.2" stop-color="#4a7420"/><stop offset="0.35" stop-color="#3a5c1e"/><stop offset="0.6" stop-color="#2b461a"/><stop offset="0.8" stop-color="#1d3216"/><stop offset="1" stop-color="#0e2014"/></linearGradient>
<linearGradient id="gS2" x1="0" y1="300" x2="0" y2="382" gradientUnits="userSpaceOnUse"><stop offset="0" stop-color="#6c9e2c"/><stop offset="0.2" stop-color="#588630"/><stop offset="0.42" stop-color="#4a6a42"/><stop offset="0.62" stop-color="#56685e"/><stop offset="0.85" stop-color="#2e4a46"/><stop offset="1" stop-color="#122e30"/></linearGradient>
<linearGradient id="gRS" x1="0" y1="260" x2="0" y2="382" gradientUnits="userSpaceOnUse"><stop offset="0" stop-color="#527e28"/><stop offset="0.3" stop-color="#3d6020"/><stop offset="0.55" stop-color="#2c481c"/><stop offset="0.8" stop-color="#1e3418"/><stop offset="1" stop-color="#0e1e14"/></linearGradient>
<linearGradient id="gO1" x1="0" y1="323" x2="0" y2="382" gradientUnits="userSpaceOnUse"><stop offset="0" stop-color="#d08a3a"/><stop offset="0.6" stop-color="#c67c36"/><stop offset="0.85" stop-color="#b87848"/><stop offset="1" stop-color="#a06c70"/></linearGradient>
<linearGradient id="gO2" x1="0" y1="325" x2="0" y2="382" gradientUnits="userSpaceOnUse"><stop offset="0" stop-color="#c47a30"/><stop offset="0.5" stop-color="#c88640"/><stop offset="0.75" stop-color="#9a8a5c"/><stop offset="1" stop-color="#7c6a9a"/></linearGradient>
<linearGradient id="gTe" x1="0" y1="349" x2="0" y2="382" gradientUnits="userSpaceOnUse"><stop offset="0" stop-color="#2a7472"/><stop offset="0.4" stop-color="#1e6266"/><stop offset="1" stop-color="#12424c"/></linearGradient>
<linearGradient id="gRk" x1="0" y1="0" x2="0" y2="1"><stop offset="0" stop-color="#8e98a6"/><stop offset="0.5" stop-color="#6c7684"/><stop offset="1" stop-color="#4c5562"/></linearGradient>
<linearGradient id="gLK" x1="0" y1="306" x2="0" y2="372" gradientUnits="userSpaceOnUse"><stop offset="0" stop-color="#a6e032"/><stop offset="0.5" stop-color="#9ed03a"/><stop offset="0.8" stop-color="#86a62e"/><stop offset="1" stop-color="#6c8a2a"/></linearGradient>
</defs>
<g id="art" clip-path="url(#cv)">
<rect x="278.4" y="79.2" width="218.4" height="302.6" fill="#ffffff"/>
<!-- light rays -->
<g fill="#dde2f0" opacity="0.13" filter="url(#blr)">
<path d="M330 96 L346 100 L292 150 L282 138Z"/>
<path d="M352 112 L366 112 L310 240 L290 232Z"/>
<path d="M384 112 L394 112 L370 300 L352 300Z"/>
<path d="M398 110 L410 110 L408 330 L392 330Z"/>
<path d="M420 108 L432 108 L452 270 L438 272Z"/>
<path d="M440 100 L452 98 L494 180 L486 192Z"/>
<path d="M470 92 L480 90 L497 120 L497 136Z"/>
</g>
<!-- sand -->
<path d="M316 374 Q330 372 340 366 Q356 363.6 374 365 L380 382 L316 382Z" fill="#e9b684"/>
<path d="M472 364 H482 V382 H470Z" fill="#e6ae78"/>
<!-- grey rocks left -->
<path d="M296.4 353 Q298 348.6 306 347.8 Q316 346.8 322 349.6 Q325.4 352 324.6 356 Q322 360.4 310 360 Q298 360.4 296.4 356Z" fill="url(#gRk)" stroke="#3c4048" stroke-width="0.4"/>
<path d="M302 367 Q304 362.6 314 362.2 Q326 361.6 332 365 Q335.6 368 333 371.6 Q326 374 314 373.4 Q303 373.4 302 370Z" fill="url(#gRk)" stroke="#3c4048" stroke-width="0.4"/>
<!-- small rock -->
<path d="M345.6 367.6 Q345.8 363.6 349 363 Q353.4 362.8 353.8 366 L353.6 368.2Z" fill="#5c646e" stroke="#30343c" stroke-width="0.4"/>
<!-- grey rock middle -->
<path d="M365 355.4 Q366 350.8 372.6 347.2 Q380 347.4 388 349.6 Q396 350.6 399.6 355 Q399 358 392 358.4 Q384 358.2 380 360.2 Q372 360.6 368 358.6 Q365 357.6 365 355.4Z" fill="url(#gRk)" stroke="#3c4048" stroke-width="0.4"/>
<!-- grey rocks right -->
<path d="M470 350 Q471 344.4 476 343.4 H490 V351 H470Z" fill="#8c929c" stroke="#3c4048" stroke-width="0.4"/>
<path d="M444 358 Q447 351.6 456 350.6 Q470 349.6 490 351 V365.4 H450 Q444 363 444 358Z" fill="url(#gRk)" stroke="#3c4048" stroke-width="0.4"/>
<!-- small plant center -->
<g stroke="#2c4a22" stroke-width="0.3">
<path d="M380.9 348 Q381.6 340 383 333.4" fill="none" stroke="#4a6a34" stroke-width="0.6"/>
<path d="M382.6 336.6 Q382.2 333 384.2 331.2 Q385.4 334 382.6 336.6Z" fill="#5e9c3a"/>
<path d="M381.8 339.6 Q378.4 339.4 376.4 336.2 Q380.4 335.6 381.8 339.6Z" fill="#5a9836"/>
<path d="M382 340.4 Q384.6 337.2 387.6 337.8 Q386 341 382 340.4Z" fill="#7cbc4e"/>
<path d="M381.4 343.8 Q377.6 344.2 374.8 341.4 Q379 340.4 381.4 343.8Z" fill="#86c456"/>
<path d="M381.6 344.6 Q384 341.6 386.8 342.4 Q385.2 345.6 381.6 344.6Z" fill="#62a03c"/>
</g>
<!-- orange kelp 2 -->
<path d="M343.3 325.7 Q347.4 327.6 351.5 331.3 Q356.4 335.6 359.8 341 Q362.6 346.6 364.3 353 Q365.6 359 365.8 365 Q365.8 374 365 382.4 L353 382.4 Q356.4 373 357.6 365 Q358.2 358 357.6 351.6 Q356 345 353 339.5 Q350 334 346.3 329.8 Q344.6 327.4 343.3 325.7Z" fill="url(#gO2)" stroke="#1c1426" stroke-width="0.5"/>
<path d="M350 332 Q356 338.4 359.4 346 Q362 354 362 364" fill="none" stroke="#e2a050" stroke-width="0.8" opacity="0.7"/>
<!-- teal rock -->
<path d="M359 382 L363 376 L367.4 371 L380 365 L390.6 361.4 L401.2 356 L410.4 349.4 L425.6 351.6 L437.6 355.2 L446.6 360.6 L463.2 365 L470.8 371 L478.2 377 L479.4 382Z" fill="url(#gTe)" stroke="#0c2a34" stroke-width="0.5"/>
<path d="M401.2 356 L410.4 349.6 L425.6 351.8 L437.6 355.4 Q424 359 410 357.6Z" fill="#2f7e7a" opacity="0.8"/>
<path d="M367.4 371 Q390 364 412 364.6 Q436 366.6 455 369.4 M420 382 L424 370.6 M455 369.4 L470 374" fill="none" stroke="#0e3640" stroke-width="0.6"/>
<path d="M380 365.4 Q396 361 410 361.2" fill="none" stroke="#0e3640" stroke-width="0.5"/>
<!-- moss -->
<ellipse cx="444.8" cy="364.6" rx="17" ry="2" fill="#8ecb46" stroke="#4e7a2a" stroke-width="0.4"/>
<!-- red/brown stalk lower -->
<path d="M456.4 320 Q458 336 456.6 347 Q455.4 356 455.6 363 L461.8 363 Q461.2 354 462 346 Q462.6 334 461.6 320Z" fill="#8a4a3c" stroke="#1c1426" stroke-width="0.4"/>
<path d="M458.6 346 Q457.4 356 457.8 363 L460 363 Q459.6 354 460.4 346Z" fill="#7c3a6a"/>
<!-- green stalk upper -->
<path d="M456.9 282.2 Q458.6 283.6 460.5 285.8 Q461.4 291 461 295.6 Q459.4 300 459.7 305.2 Q461.6 310 461.8 315 Q461.2 320 460.8 326 L456.2 326 Q456 318 454.8 310 Q453 306 453.2 302 Q453.2 297 454 294 Q456 289 456.9 282.2Z" fill="#45a046" stroke="#5a3a22" stroke-width="0.4"/>
<path d="M456.9 283.6 Q456.6 290 454.6 294.4 Q453.8 298 453.9 302 Q454 306 455.4 310 Q456.6 318 456.8 326 L458 326 Q457.8 316 457 309 Q456.2 304 456.6 299 Q457.6 292 457.6 286Z" fill="#62dc6a"/>
<path d="M457.4 284 Q458.4 292 457.4 299 Q456.8 305 458 310 Q459 318 458.6 326" fill="none" stroke="#8a4a2a" stroke-width="0.45"/>
<!-- plant with leaves (right) -->
<g stroke="#2e4a22" stroke-width="0.3">
<path d="M443 355.6 Q442.4 346 440.4 338 Q438 329 433.8 321.6" fill="none" stroke="#3c4a34" stroke-width="0.6"/>
<path d="M433.6 323 Q429 320.4 428.6 315.4 Q433.4 316.2 435.6 319.4 Q437 322.4 433.6 323Z" fill="#7ab844"/>
<path d="M432.6 331 Q427.6 332.4 424.2 328.4 Q429.2 326 432.6 331Z" fill="#86c44a"/>
<path d="M441.8 333 Q444.8 328 450 329.2 Q448 334.6 441.8 333Z" fill="#78b442"/>
<path d="M439.2 342 Q434.2 343.6 430.2 339.6 Q435.6 337 439.2 342Z" fill="#8ccc4e"/>
<path d="M444.8 344 Q447.8 339.6 452.4 340.4 Q450.4 345.4 444.8 344Z" fill="#70ac3e"/>
<path d="M440.2 348.2 Q435.4 350 431 346.4 Q436.4 343.8 440.2 348.2Z" fill="#7cbc46"/>
</g>
<!-- light green kelp -->
<path d="M445.8 306 Q447.8 306.6 448.4 308.6 Q448.6 314 451.4 318.4 Q455 324 459.6 329.6 Q466 337 470.6 345 Q474.4 352 475.6 360 Q476.4 367 475.6 373.4 L470.2 370.6 Q468.6 366 467 364.6 Q465.8 358 463.2 353 Q459.6 345.6 454.2 339.6 Q448.2 333 444.2 326 Q440.8 319 440.6 312.6 Q441.2 307.6 445.8 306Z" fill="url(#gLK)" stroke="#32501c" stroke-width="0.45"/>
<path d="M444.6 309 Q443 314 445 320 Q447.4 327 453.4 333.6 Q459.4 340 463.4 348" fill="none" stroke="#c8f060" stroke-width="1.1" opacity="0.8"/>
<path d="M447 308 Q446.8 316 450.4 322 Q455.4 329.6 461.4 336.6 Q468.4 345 471.4 354 Q473.4 362 473.2 371" fill="none" stroke="#4a7420" stroke-width="0.4"/>
<!-- right tall seaweed -->
<path d="M478.6 260.4 Q481.6 259.8 482.3 262.4 Q482.8 267 482.3 271.2 Q481 276 480.7 281 Q480 287 480.7 294 Q481.4 300 483.2 305.2 Q486 310.6 489.6 315 Q493 319.6 495.3 323 Q496.6 326 497.4 330 L497.4 382.4 L479 382.4 Q480 372 480.6 365 Q482.6 357 482.4 350 Q482.4 342 481.8 335 Q480.6 329 478.3 324.6 Q474.6 318.6 472.6 313.3 Q470.4 308 470.2 303.6 Q470.4 296 471.5 290.6 Q472.8 284 474.3 277.7 Q476.4 272 477.5 268 Q476.6 264.6 475.9 262.3 Q476.6 260.6 478.6 260.4Z" fill="url(#gRS)" stroke="#16281a" stroke-width="0.5"/>
<path d="M479.6 264 Q480.6 270 478.4 278 Q475.6 290 475.8 302 Q477 312 482.6 321 Q487 330 487.6 342 Q488 360 486 382" fill="none" stroke="#1c3418" stroke-width="0.5" opacity="0.9"/>
<path d="M478 286 Q477 300 480 309 Q485 319 490.6 327 Q493.6 334 493.4 346" fill="none" stroke="#1c3418" stroke-width="0.4" opacity="0.8"/>
<!-- left tall seaweed -->
<path d="M277.6 264 Q280 259 282.5 255.3 Q284.6 252 286.7 250 Q288.4 248.4 289.8 248.9 Q291.6 250 291.5 253.2 Q290.4 256.4 288 259.4 Q285.6 263.6 284.6 267.8 Q286 271.6 288 274.7 Q285.4 279.6 283.9 284.4 Q283 288.6 283.2 292.8 Q283.6 296 283.9 299 Q285 303 286 306 Q287 312 288 317 Q290.2 323 292.9 328.3 Q293.8 334 293.6 340.8 Q294.4 348 295.7 353.9 Q297.6 359 299.9 363.6 Q302.4 368.6 304.7 373.3 Q306.6 377.6 308.4 382.4 L277.6 382.4Z" fill="url(#gLS)" stroke="#16281a" stroke-width="0.5"/>
<path d="M281.6 300 Q284 316 288 330 Q291 344 290.4 358 Q290 370 292 382" fill="none" stroke="#14261a" stroke-width="0.45" opacity="0.9"/>
<path d="M279 320 Q283 338 284 356 Q284 370 285 382" fill="none" stroke="#14261a" stroke-width="0.4" opacity="0.8"/>
<!-- small light blade -->
<path d="M299.8 318.9 Q302.6 321.6 304 326 Q304.4 333 301.6 339 Q298.6 345 295.4 350.6 L292.6 352 Q293 345 296.4 339.6 Q300.4 333 301.2 327 Q301 322 299.8 318.9Z" fill="#b4de72" stroke="#2c1630" stroke-width="0.5"/>
<path d="M301.6 330 Q300 337 296.6 342 Q294 347 293.6 351" fill="none" stroke="#eaf6d8" stroke-width="0.7"/>
<!-- second seaweed -->
<path d="M301.6 300.2 Q303.4 299.4 305.2 300.4 Q306.6 301.4 307.2 303.3 Q308.4 307.6 310.3 311.7 Q312.6 316 314.2 320.7 Q315 327 314.7 333.9 Q314.6 344 314.7 354.7 Q315.4 362 316.5 367.8 Q318.4 375 320.9 382.4 L307.4 382.4 Q306.2 373 305.4 365 Q306 359 306.4 354.7 Q306.9 347 306.8 340.8 Q306.8 334 306.4 327 Q305.4 320 304 314.4 Q301.6 308 299.9 302.6 Q300.2 301 301.6 300.2Z" fill="url(#gS2)" stroke="#14241e" stroke-width="0.5"/>
<path d="M304.4 304 Q307 314 309.4 324 Q310.6 336 310.4 350 Q310.6 366 313 382" fill="none" stroke="#1c3028" stroke-width="0.4" opacity="0.8"/>
<!-- orange kelp 1 -->
<path d="M338.2 323.2 Q335.6 324.6 333.9 327 Q331.4 331.6 330.4 336.7 Q330 342 331.1 346.4 Q332.6 351 334.6 354 Q337 357.6 339.4 360.8 Q342 366 343.6 372 Q345 377 345.8 382.4 L334 382.4 Q333.8 377 333.2 372 Q331.6 366 329.7 360.8 Q327.2 354 325.6 348.3 Q324.6 344 324.9 340.8 Q326.4 334 329.7 329.7 Q333.6 325 338.2 323.2Z" fill="url(#gO1)" stroke="#1c1426" stroke-width="0.5"/>
<path d="M331.6 330 Q327.8 337 327.6 344 Q329 353 332.6 361" fill="none" stroke="#eab060" stroke-width="0.9" opacity="0.8"/>
<path d="M333.2 372 Q331.6 366 329.7 360.8 L331.6 359 Q335 365 336.8 372 Q337.8 377 338.2 382.4 L334 382.4Z" fill="#8e5e9e" opacity="0.9"/>
</g>

<g transform="translate(688.8 55) scale(0.1794 0.1735) translate(-278.4 -79.2)"><use href="#art"/></g>
<g fill="#ffffff"><path d="M5.2 420.1 L9.3 419.5 V423 H5.2Z M9.9 419.4 L15 418.7 V423 H9.9Z M5.2 423.6 H9.3 V427.1 L5.2 426.5Z M9.9 423.6 H15 V427.9 L9.9 427.2Z"/></g>
<g fill="none" stroke="#ffffff" stroke-width="1.3"><circle cx="32.3" cy="421.6" r="3.3"/><path d="M30 424.2 L26.3 428" stroke-linecap="round"/></g>
<g><rect x="48.2" y="419" width="3.6" height="3.6" rx="0.8" fill="#5fd0a0"/><rect x="52.6" y="419" width="3.6" height="3.6" rx="0.8" fill="#3aa6a0"/><rect x="48.2" y="423.4" width="3.6" height="3.6" rx="0.8" fill="#3aa6a0"/><circle cx="54.6" cy="425.6" r="1.9" fill="#2a7be4"/><path d="M50 419 L54.4 427 M54.4 419 L50 427" stroke="#1f6e68" stroke-width="1"/></g>
<g><path d="M68.3 420.3 H77.3 V426.6 Q77.3 427.8 76.1 427.8 H69.5 Q68.3 427.8 68.3 426.6Z" fill="#f2f2f2"/><path d="M70.8 420.3 V419.4 Q70.8 418.6 71.6 418.6 H74 Q74.8 418.6 74.8 419.4 V420.3" fill="none" stroke="#f2f2f2" stroke-width="0.7"/><rect x="70.6" y="421.8" width="2" height="2" fill="#f25022"/><rect x="73" y="421.8" width="2" height="2" fill="#7fba00"/><rect x="70.6" y="424.2" width="2" height="2" fill="#00a4ef"/><rect x="73" y="424.2" width="2" height="2" fill="#ffb900"/></g>
<defs><radialGradient id="ffx" cx="0.6" cy="0.25" r="0.9"><stop offset="0" stop-color="#ffe14a"/><stop offset="0.4" stop-color="#ff8a16"/><stop offset="0.8" stop-color="#f0304a"/><stop offset="1" stop-color="#c01f80"/></radialGradient></defs><circle cx="93.8" cy="423.5" r="4.7" fill="url(#ffx)"/><circle cx="93.9" cy="424" r="2.3" fill="#7a3ad0"/><path d="M90.4 420.6 Q92.2 419.4 93.6 420.6 Q95.4 420.2 96.2 422.4 Q94.2 421.6 92.6 422.6 Q91 423.6 91.8 425.6 Q89.6 424 90.4 420.6Z" fill="#ffb02a"/>
<defs><linearGradient id="edg" x1="0" y1="0" x2="1" y2="1"><stop offset="0" stop-color="#35c1f1"/><stop offset="0.5" stop-color="#1b8ad6"/><stop offset="1" stop-color="#0c59a4"/></linearGradient></defs><circle cx="114.7" cy="423.4" r="4.7" fill="url(#edg)"/><path d="M110.2 422.6 Q111.2 418.8 115 418.7 Q118.8 418.9 119.4 422.6 Q117.8 420.6 115 420.9 Q112 421.2 110.2 422.6Z" fill="#5fdc7a"/><path d="M113 423.2 Q112.6 426.4 116.2 426.6 Q118.2 426.4 119 425 Q118 428.2 114.6 428.1 Q111.4 427.6 111.4 424.4 Q112 423.4 113 423.2Z" fill="#0b4f94"/>
<g><path d="M130.9 421.6 L135.6 418.6 L140.3 421.6 V427.6 H130.9Z" fill="#1f8fe0"/><path d="M130.9 421.6 L135.6 424.6 L140.3 421.6 L140.3 422.8 L135.6 425.8 L130.9 422.8Z" fill="#ffffff"/><path d="M130.9 423.2 L135.6 426.2 L140.3 423.2 V427.6 H130.9Z" fill="#2aa4f0"/></g>
<circle cx="156.3" cy="423.4" r="4.7" fill="#2aa3dc"/><path d="M153.2 423.4 L159.3 420.9 L158.3 426.3 L156.3 424.9 L155.3 425.9 L155.2 424.3Z" fill="#ffffff"/>
<circle cx="177" cy="423.4" r="4.7" fill="#5865f2"/><path d="M174.2 421.9 Q177 420.9 179.8 421.9 Q180.8 423.9 180.6 425.6 Q179.6 426.2 178.8 426.3 L178.4 425.6 Q177 426 175.6 425.6 L175.2 426.3 Q174.4 426.2 173.4 425.6 Q173.2 423.9 174.2 421.9Z" fill="#ffffff"/><circle cx="175.9" cy="423.9" r="0.65" fill="#5865f2"/><circle cx="178.1" cy="423.9" r="0.65" fill="#5865f2"/>
<defs><linearGradient id="mp" x1="0" y1="0" x2="1" y2="1"><stop offset="0" stop-color="#f0a040"/><stop offset="1" stop-color="#a050c8"/></linearGradient></defs><circle cx="198" cy="423.4" r="4.3" fill="#2a2430" stroke="url(#mp)" stroke-width="1"/><path d="M196.7 421.2 L200.3 423.4 L196.7 425.6Z" fill="#ffffff"/>
<g><path d="M213.7 419.4 H217 L217.8 420.3 H222.9 V427 H213.7Z" fill="#f7c948"/><path d="M213.7 421.6 H222.9 V427.3 H213.7Z" fill="#ffd75e"/><rect x="215.6" y="424.3" width="5.4" height="3" fill="#3a8ee0"/><rect x="217.3" y="425.6" width="2" height="1.7" fill="#ffd75e"/></g>
<g><circle cx="239.7" cy="423.4" r="4.7" fill="#e8453c"/><path d="M239.7 423.4 L235.63 421.04999999999995 A4.7 4.7 0 0 0 239.7 428.09999999999997 Z" fill="#34a853"/><path d="M239.7 423.4 L243.76999999999998 421.04999999999995 A4.7 4.7 0 0 1 239.7 428.09999999999997 Z" fill="#fbbc05"/><path d="M235.63 421.04999999999995 A4.7 4.7 0 0 1 243.76999999999998 421.04999999999995 L239.7 423.0Z" fill="#e8453c"/><circle cx="239.7" cy="423.4" r="2.2" fill="#ffffff"/><circle cx="239.7" cy="423.4" r="1.7" fill="#4285f4"/></g>
<circle cx="242.29999999999998" cy="426.0" r="2" fill="#3a3a3a"/><circle cx="242.29999999999998" cy="425.5" r="0.9" fill="#e8c890"/>
<g><circle cx="447.6" cy="423.4" r="4.7" fill="#e8453c"/><path d="M447.6 423.4 L443.53000000000003 421.04999999999995 A4.7 4.7 0 0 0 447.6 428.09999999999997 Z" fill="#34a853"/><path d="M447.6 423.4 L451.67 421.04999999999995 A4.7 4.7 0 0 1 447.6 428.09999999999997 Z" fill="#fbbc05"/><path d="M443.53000000000003 421.04999999999995 A4.7 4.7 0 0 1 451.67 421.04999999999995 L447.6 423.0Z" fill="#e8453c"/><circle cx="447.6" cy="423.4" r="2.2" fill="#ffffff"/><circle cx="447.6" cy="423.4" r="1.7" fill="#4285f4"/></g>
<ellipse cx="260.2" cy="423.4" rx="4.6" ry="4.8" fill="#e8202c"/><ellipse cx="260.2" cy="423.4" rx="1.9" ry="3.3" fill="#1c2935"/>
<circle cx="281" cy="423.2" r="4.5" fill="#1c2935" stroke="#2bd46a" stroke-width="1.1"/><path d="M276.6 428.2 L277.4 425.4 L279.2 427.2Z" fill="#2bd46a"/><path d="M279.2 421.2 Q279 423.6 280.6 424.8 Q281.8 425.8 283 425.4 L283.2 424.4 L282 423.9 L281.5 424.3 Q280.4 423.7 280.2 422.7 L280.6 422.2 L280.2 421Z" fill="#2bd46a"/>
<rect x="297.6" y="419" width="8.8" height="8.8" rx="1.2" fill="#f4f4f4"/><path d="M300.2 422.6 Q300 420.6 302.2 420.6 Q304.6 420.8 304.4 422.8 Q304.2 424.4 302.4 424.4 Q301.4 424.2 301.6 423.2 Q302.8 423.4 302.8 422.6 M302.4 424.4 Q302 425.8 300.6 426.4" fill="none" stroke="#1a1a1a" stroke-width="1.15"/>
<rect x="318" y="419" width="9" height="8.8" rx="0.8" fill="#330000"/>
<rect x="339" y="419" width="9" height="8.8" rx="0.8" fill="#001e36" stroke="#31a8ff" stroke-width="0.6"/>
<circle cx="364.3" cy="423.4" r="4.7" fill="#1877f2"/><path d="M365 428 V424.4 H366.3 L366.5 423 H365 V422.2 Q365 421.5 365.8 421.5 H366.6 V420.3 Q366 420.2 365.4 420.2 Q363.6 420.2 363.6 422 V423 H362.4 V424.4 H363.6 V428Z" fill="#ffffff"/>
<rect x="380.4" y="419" width="9.2" height="8.8" fill="#f2f2f2"/><path d="M382.3 426.6 L384.6 423.4 L387.4 423 M384.6 423.4 L383.6 421.6 M385 423.4 L387.8 426.6 M382 422.2 L385 421.4 L388 422.2" fill="none" stroke="#333" stroke-width="0.7"/><circle cx="385" cy="420.6" r="0.8" fill="#333"/>
<path d="M401.6 424.4 L406 420.4 L406.8 421.3 L405.6 422.4 H408.4 Q410.8 423.6 409.6 426 Q408 428 405.6 427.2 Q404 426.6 403.8 425.2 L402.6 425.4Z" fill="#ea7600"/><circle cx="406.8" cy="424.6" r="1.7" fill="#ffffff"/><circle cx="406.8" cy="424.6" r="0.9" fill="#265787"/>
<circle cx="427.4" cy="423.4" r="4.6" fill="#d35230"/><path d="M427.4 418.8 A4.6 4.6 0 0 1 432 423.4 H427.4Z" fill="#ff8f6b"/><rect x="423" y="421" width="5" height="5" rx="0.5" fill="#c43e1c"/>
<g fill="none" stroke="#f0f0f0" stroke-width="0.8"><rect x="615.3" y="419.2" width="13.2" height="8.2" rx="0.8"/><rect x="617.2" y="421.8" width="4" height="3.6"/><path d="M623 421.4 H626.6 M623 423.4 H626.6 M623 425.4 H626.6 M627 419.2 V427.4"/></g><rect x="618.4" y="423" width="1.6" height="1.4" fill="#f0f0f0"/>
<path d="M640 425 L643.1 421.9 L646.2 425" fill="none" stroke="#f0f0f0" stroke-width="0.9"/>
<g fill="none" stroke="#f0f0f0" stroke-width="0.75"><rect x="654.6" y="420.6" width="4.2" height="5.4" rx="0.9"/><path d="M658.8 422.6 L660.6 421.6 V425 L658.8 424 M654.8 419 Q656.8 418.2 658.8 419 M654.8 427.6 Q656.8 428.4 658.8 427.6"/></g>
<g><rect x="666.2" y="421.6" width="8" height="4" rx="0.5" fill="none" stroke="#f0f0f0" stroke-width="0.7"/><rect x="666.8" y="422.2" width="5" height="2.8" fill="#f0f0f0"/><rect x="674.4" y="422.8" width="0.8" height="1.6" fill="#f0f0f0"/><path d="M665.4 420.2 H668.2 V421.4 M666.8 419.4 V420.2" stroke="#f0f0f0" stroke-width="0.7" fill="none"/></g>
<g fill="none" stroke="#f0f0f0" stroke-width="0.75"><circle cx="683.3" cy="423.4" r="4.2"/><ellipse cx="683.3" cy="423.4" rx="1.9" ry="4.2"/><path d="M679.1 423.4 H687.5 M679.8 421.2 H686.8 M679.8 425.6 H686.8"/></g><circle cx="686" cy="426.2" r="1.7" fill="#1f3646" stroke="#f0f0f0" stroke-width="0.6"/><path d="M685 425.2 L687 427.2" stroke="#f0f0f0" stroke-width="0.5"/>
<g fill="none" stroke="#f0f0f0" stroke-width="0.75"><path d="M692.2 422.2 H693.8 L696 420 V426.8 L693.8 424.6 H692.2Z"/><path d="M697.4 421.8 Q698.4 423.4 697.4 425 M698.8 420.6 Q700.4 423.4 698.8 426.2" stroke="#f0f0f0"/><path d="M700.3 419.6 Q702.4 423.4 700.3 427.2" stroke="#8a98a4"/></g>
<path d="M745 419.2 H754 V425.8 H750.6 L749.5 427.4 L748.4 425.8 H745Z" fill="none" stroke="#f0f0f0" stroke-width="0.8"/>
</svg>
<span style="left:293.5px;top:4px;transform:scaleX(0.899);transform-origin:0 50%;font-size:7px;color:#cfcfcf;">whale* (2816 x 3912px 72dpi 13.8%)&nbsp; - CLIP STUDIO PAINT EX</span>
<span style="left:8.5px;top:17px;transform:scaleX(0.909);transform-origin:0 50%;font-size:7px;color:#e6e6e6;">File</span>
<span style="left:31px;top:17px;transform:scaleX(0.933);transform-origin:0 50%;font-size:7px;color:#e6e6e6;">Edit</span>
<span style="left:53.75px;top:17px;transform:scaleX(0.925);transform-origin:0 50%;font-size:7px;color:#e6e6e6;">Story(P)</span>
<span style="left:89px;top:17px;transform:scaleX(0.996);transform-origin:0 50%;font-size:7px;color:#e6e6e6;">Animation</span>
<span style="left:132.6px;top:17px;transform:scaleX(0.922);transform-origin:0 50%;font-size:7px;color:#e6e6e6;">Layer</span>
<span style="left:160px;top:17px;transform:scaleX(0.92);transform-origin:0 50%;font-size:7px;color:#e6e6e6;">Select</span>
<span style="left:189.75px;top:17px;transform:scaleX(0.94);transform-origin:0 50%;font-size:7px;color:#e6e6e6;">View</span>
<span style="left:216.75px;top:17px;transform:scaleX(0.942);transform-origin:0 50%;font-size:7px;color:#e6e6e6;">Filter</span>
<span style="left:243px;top:17px;transform:scaleX(0.988);transform-origin:0 50%;font-size:7px;color:#e6e6e6;">Window</span>
<span style="left:279.5px;top:17px;transform:scaleX(0.955);transform-origin:0 50%;font-size:7px;color:#e6e6e6;">Help</span>
<span style="left:10.3px;top:45px;transform:scaleX(0.871);transform-origin:0 50%;font-size:6.5px;color:#ccd2e2;">whale*</span>
<span style="left:65px;top:61px;transform:scaleX(0.834);transform-origin:0 50%;font-size:5.6px;color:#9a9a9a;">Sub Tool</span>
<span style="left:17.9px;top:72px;transform:scaleX(0.841);transform-origin:0 50%;font-size:7px;color:#f2f4f8;">Operation</span>
<span style="left:89px;top:72px;transform:scaleX(0.82);transform-origin:0 50%;font-size:7px;color:#e6e6e6;">Select layer</span>
<span style="left:51.9px;top:97px;transform:scaleX(0.845);transform-origin:0 50%;font-size:6.8px;color:#f4f4f8;">Object</span>
<span style="left:109.25px;top:97px;transform:scaleX(0.86);transform-origin:0 50%;font-size:6.8px;color:#e6e6e6;">Light table</span>
<span style="left:37.9px;top:117px;transform:scaleX(0.833);transform-origin:0 50%;font-size:6.8px;color:#e6e6e6;">Edit timeline</span>
<span style="left:61px;top:138px;transform:scaleX(0.86);transform-origin:0 50%;font-size:6.8px;color:#e6e6e6;">Add sub tool</span>
<span style="left:49.75px;top:187px;transform:scaleX(0.859);transform-origin:0 50%;font-size:5.6px;color:#9a9a9a;">Tool Property</span>
<span style="left:3.75px;top:197px;transform:scaleX(0.857);transform-origin:0 50%;font-size:6.8px;color:#f4f4f4;">Object</span>
<span style="left:23.75px;top:221px;transform:scaleX(0.869);transform-origin:0 50%;font-size:6.8px;color:#e8e8e8;">Operation of transparent part</span>
<span style="left:38.8px;top:239px;transform:scaleX(0.88);transform-origin:0 50%;font-size:6.8px;color:#e8e8e8;">Selectable object</span>
<span style="left:36.1px;top:290px;transform:scaleX(0.867);transform-origin:0 50%;font-size:5.6px;color:#9a9a9a;">Color Wheel</span>
<span style="left:33.75px;top:387px;transform:scaleX(0.72);transform-origin:0 50%;font-size:7.2px;color:#ececec;">164</span>
<span style="left:51.7px;top:387px;transform:scaleX(0.749);transform-origin:0 50%;font-size:7.2px;color:#ececec;">168</span>
<span style="left:69px;top:387px;transform:scaleX(0.824);transform-origin:0 50%;font-size:7.2px;color:#ececec;">220</span>
<span style="left:51.7px;top:399px;transform:scaleX(0.829);transform-origin:0 50%;font-size:7px;color:#e6e6e6;">13.8</span>
<span style="left:102px;top:399px;transform:scaleX(0.822);transform-origin:0 50%;font-size:7px;color:#e6e6e6;">0.0</span>
<span style="left:696.8px;top:48px;transform:scaleX(0.935);transform-origin:0 50%;font-size:5.6px;color:#9a9a9a;">Navigator</span>
<span style="left:692.3px;top:113px;transform:scaleX(0.807);transform-origin:0 50%;font-size:7px;color:#e6e6e6;">13.8</span>
<span style="left:656.8px;top:124px;transform:scaleX(0.822);transform-origin:0 50%;font-size:7px;color:#e6e6e6;">0.0</span>
<span style="left:701px;top:147px;transform:scaleX(0.878);transform-origin:0 50%;font-size:5.6px;color:#9a9a9a;">Layer</span>
<span style="left:679.5px;top:156px;transform:scaleX(0.855);transform-origin:0 50%;font-size:7px;color:#e8e8e8;">Color</span>
<span style="left:750.8px;top:156px;transform:scaleX(0.822);transform-origin:0 50%;font-size:7px;color:#e8e8e8;">20</span>
<span style="left:693.7px;top:194px;transform:scaleX(0.88);transform-origin:0 50%;font-size:6.8px;color:#e4e4e4;">Layer 29</span>
<span style="left:694.2px;top:206px;transform:scaleX(0.844);transform-origin:0 50%;font-size:6.6px;color:#e4e4e4;">100 % Normal</span>
<span style="left:694.2px;top:218px;transform:scaleX(0.86);transform-origin:0 50%;font-size:6.8px;color:#e4e4e4;">Layer 9</span>
<span style="left:696.2px;top:229px;transform:scaleX(0.844);transform-origin:0 50%;font-size:6.6px;color:#e4e4e4;">100 % Normal</span>
<span style="left:696.2px;top:241px;transform:scaleX(0.88);transform-origin:0 50%;font-size:6.8px;color:#e4e4e4;">Layer 24</span>
<span style="left:694.2px;top:252px;transform:scaleX(0.844);transform-origin:0 50%;font-size:6.6px;color:#e4e4e4;">100 % Normal</span>
<span style="left:694.2px;top:264px;transform:scaleX(0.88);transform-origin:0 50%;font-size:6.8px;color:#e4e4e4;">Layer 10</span>
<span style="left:696.2px;top:274px;transform:scaleX(0.844);transform-origin:0 50%;font-size:6.6px;color:#e4e4e4;">100 % Normal</span>
<span style="left:696.2px;top:282px;transform:scaleX(0.855);transform-origin:0 50%;font-size:6.8px;color:#e4e4e4;">Folder 1 Copy</span>
<span style="left:703px;top:292px;transform:scaleX(0.844);transform-origin:0 50%;font-size:6.6px;color:#e4e4e4;">100 % Normal</span>
<span style="left:703px;top:304px;transform:scaleX(0.848);transform-origin:0 50%;font-size:6.8px;color:#e4e4e4;">Layer 32 Copy</span>
<span style="left:696.2px;top:315px;transform:scaleX(0.844);transform-origin:0 50%;font-size:6.6px;color:#e4e4e4;">100 % Normal</span>
<span style="left:696.2px;top:322px;transform:scaleX(0.842);transform-origin:0 50%;font-size:6.8px;color:#e4e4e4;">Folder 1</span>
<span style="left:694.2px;top:333px;transform:scaleX(0.844);transform-origin:0 50%;font-size:6.6px;color:#e4e4e4;">100 % Normal</span>
<span style="left:694.2px;top:345px;transform:scaleX(0.851);transform-origin:0 50%;font-size:6.8px;color:#e4e4e4;">Layer 1</span>
<span style="left:694.2px;top:356px;transform:scaleX(0.844);transform-origin:0 50%;font-size:6.6px;color:#e4e4e4;">100 % Normal</span>
<span style="left:694.2px;top:368px;transform:scaleX(0.88);transform-origin:0 50%;font-size:6.8px;color:#e4e4e4;">Layer 42</span>
<span style="left:694.2px;top:379px;transform:scaleX(0.844);transform-origin:0 50%;font-size:6.6px;color:#e4e4e4;">100 % Normal</span>
<span style="left:694.2px;top:390px;transform:scaleX(0.88);transform-origin:0 50%;font-size:6.8px;color:#e4e4e4;">Layer 22</span>
<span style="left:709px;top:420px;transform:scaleX(0.915);transform-origin:0 50%;font-size:7px;color:#f0f0f0;">7:03 AM</span>
<span style="left:319.6px;top:421px;transform:scaleX(1.0);transform-origin:0 50%;font-size:6px;color:#ff9a00;font-weight:bold;">Ai</span>
<span style="left:340.4px;top:421px;transform:scaleX(0.872);transform-origin:0 50%;font-size:6px;color:#31a8ff;font-weight:bold;">Ps</span>
<span style="left:424.2px;top:422px;transform:scaleX(0.78);transform-origin:0 50%;font-size:5px;color:#ffffff;font-weight:bold;">P</span>
<div style="left:27px;top:398.3px;width:2px;height:6.7px;background:#6a6a6a;"></div>
<div style="left:125.2px;top:398.3px;width:2px;height:6.7px;background:#6a6a6a;"></div>
<div style="left:670px;top:110px;width:2.6px;height:11.7px;background:#727272;border-radius:1px"></div>
<div style="left:678.1px;top:121.7px;width:2.5px;height:10.6px;background:#727272;border-radius:1px"></div>
<span style="left:603.3px;top:373px;transform:scaleX(1.015);transform-origin:0 50%;font-size:11px;color:rgba(255,255,255,0.38);">Activate Windows</span>
<span style="left:603.3px;top:386px;transform:scaleX(1.001);transform-origin:0 50%;font-size:8.4px;color:rgba(255,255,255,0.38);">Go to Settings to activate Windows.</span>
</div></body></html>
